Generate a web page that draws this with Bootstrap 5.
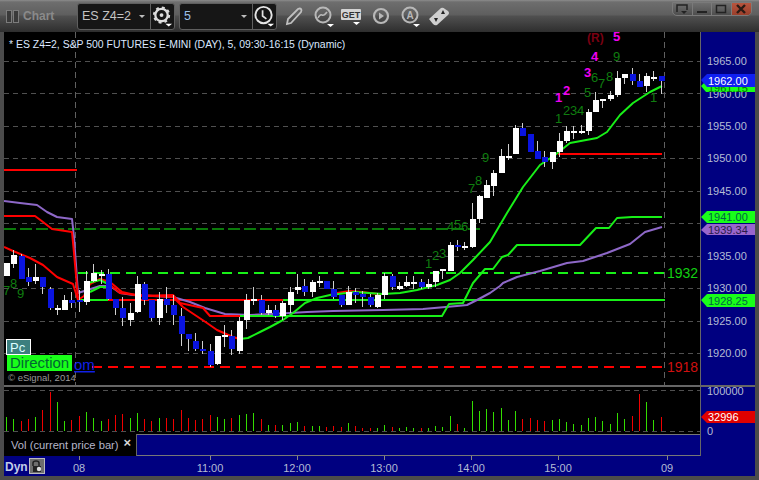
<!DOCTYPE html>
<html lang="en">
<head>
<meta charset="utf-8">
<title>Chart</title>
<link rel="stylesheet" href="https://cdn.jsdelivr.net/npm/bootstrap@5.3.0/dist/css/bootstrap.min.css">
<style>
html,body{margin:0;background:#4b4b4b;}
body{font-family:"Liberation Sans",Arial,sans-serif;overflow:hidden;}
.win-frame{width:759px;height:480px;background:#4b4b4b;}
.tool-strip{height:32px;background:linear-gradient(#8c8c8c 0,#6e6e6e 2px,#5e5e5e 15px,#505050 16px,#2e2e2e 32px);}
.bars-glyph{width:6px;height:13px;border:1px solid #7c7c7c;margin-right:1px;background:#3a3a3a;}
.bars-wrap{margin-left:6px;margin-right:3px;}
.chart-title{font-size:12px;font-weight:700;color:#8a8a8a;width:54px;}
.combo-box{height:27px;background:#161616;border:1px solid #5f5f5f;border-radius:3px;margin-right:4px;}
.combo-box + .tool-icon{margin-left:-2px;}
.combo-ro{width:72px;padding:0 5px 0 4px;color:#c4c4c4;font-size:12.5px;}
.combo-five{color:#9cc0e8;}
.combo-caret{border-left:3px solid transparent;border-right:3px solid transparent;border-top:3px solid #bdbdbd;}
.combo-btn{width:24px;height:25px;border-left:1px solid #5f5f5f;}
.tool-icon{width:29px;height:26px;}
.win-btns{height:14px;margin:2px 7px 0 auto;border:1px solid #7a7a7a;border-radius:0 0 5px 5px;width:80px;background:linear-gradient(#6f6f6f,#4e4e4e);}
.win-cell{width:20px;border-right:1px solid #7a7a7a;}
.win-close{width:20px;border-radius:0 0 4px 0;background:linear-gradient(#b8553e,#9a3f2c);color:#2a1a14;}
.chart-row{padding:0 4px;}
.plot-main{width:696px;height:353px;background:#000;}
.axis-main{width:55px;height:353px;background:#000080;border-left:1px solid #666;}
.split-line{height:2px;margin:0 4px;background:#666;}
.vol-col{width:696px;}
.plot-vol{width:696px;height:47px;background:#000;}
.legend-strip{height:22px;}
.legend-black{width:133px;background:#000;border-right:1px solid #666;color:#b6b6c8;font-size:11.2px;padding-left:7px;white-space:nowrap;}
.legend-x{color:#d8d8d8;font-size:13px;font-weight:700;line-height:1;margin:0 5px 0 auto;align-self:flex-start;padding-top:2px;}
.legend-navy{background:#000080;border-top:1px solid #777;border-bottom:1px solid #777;}
.axis-vol{width:55px;height:69px;background:#000080;border-left:1px solid #666;}
.axis-time{margin:0 4px;width:751px;height:20px;background:#000080;}
svg{display:block;}
svg text{font-family:"Liberation Sans",Arial,sans-serif;}
.grid-h{stroke:#505050;stroke-width:1;stroke-dasharray:5 4;fill:none;}
.grid-v{stroke:#606060;stroke-width:1;stroke-dasharray:6 4;}
.ln{fill:none;stroke-width:2;stroke-linejoin:round;}
.ln-red{stroke:#f00;}
.ln-lime{stroke:#18f018;}
.ln-purple{stroke:#8e68c8;}
.num-g{fill:#0f7d0f;font-size:13px;}
.num-m{fill:#f000f0;font-size:13px;font-weight:700;}
.ax-lab{fill:#b4bcd4;font-size:11px;}
.tag-txt{font-size:11px;}
.tm-lab{fill:#b4bcd4;font-size:11px;text-anchor:middle;}
</style>
</head>
<body>
<div class="win-frame d-flex flex-column">
  <div class="tool-strip d-flex align-items-center">
    <div class="bars-wrap d-flex"><span class="bars-glyph"></span><span class="bars-glyph"></span></div>
    <div class="chart-title">Chart</div>
    <div class="combo-box d-flex align-items-center">
      <div class="combo-ro d-flex align-items-center justify-content-between"><span>ES Z4=2</span><span class="combo-caret"></span></div>
      <div class="combo-btn d-flex align-items-center justify-content-center">
        <svg width="24" height="24" viewBox="0 0 24 24"><circle cx="11" cy="11" r="6.5" fill="none" stroke="#ddd" stroke-width="2.4"/><circle cx="11" cy="11" r="8" fill="none" stroke="#ddd" stroke-width="2" stroke-dasharray="3 3.3"/><circle cx="11" cy="11" r="2" fill="#ddd"/><path d="M15 20h7l-3.500 3z" fill="#fff"/></svg>
      </div>
    </div>
    <div class="combo-box d-flex align-items-center">
      <div class="combo-ro d-flex align-items-center justify-content-between"><span class="combo-five">5</span><span class="combo-caret"></span></div>
      <div class="combo-btn d-flex align-items-center justify-content-center">
        <svg width="24" height="24" viewBox="0 0 24 24"><circle cx="11" cy="11" r="8.500" fill="none" stroke="#e4e4e4" stroke-width="2"/><path d="M10 6v6l4 3" fill="none" stroke="#e4e4e4" stroke-width="1.800"/><path d="M15 20h7l-3.500 3z" fill="#fff"/></svg>
      </div>
    </div>
    <div class="tool-icon d-flex align-items-center justify-content-center">
      <svg width="24" height="24" viewBox="0 0 24 24"><path d="M5 20l1-5L16 5q2-1 3 0t0 3L9 19z" fill="none" stroke="#c0c0c0" stroke-width="1.800"/></svg>
    </div>
    <div class="tool-icon d-flex align-items-center justify-content-center">
      <svg width="24" height="24" viewBox="0 0 24 24"><circle cx="12" cy="11" r="7.500" fill="none" stroke="#b8b8b8" stroke-width="2"/><path d="M7 14q2-4 4-3t5-3" fill="none" stroke="#b8b8b8" stroke-width="1.600"/><path d="M16 20h7l-3.500 3z" fill="#fff"/></svg>
    </div>
    <div class="tool-icon d-flex align-items-center justify-content-center">
      <svg width="24" height="24" viewBox="0 0 24 24"><rect x="1" y="5" width="20" height="11" rx="1" fill="#d4d4d4"/><text x="11" y="14" font-size="9" font-weight="700" fill="#333" text-anchor="middle">GET</text><path d="M13 18h7l-3.500 3z" fill="#fff"/></svg>
    </div>
    <div class="tool-icon d-flex align-items-center justify-content-center">
      <svg width="24" height="24" viewBox="0 0 24 24"><circle cx="12" cy="12" r="7" fill="none" stroke="#b8b8b8" stroke-width="2.200"/><path d="M10 8.500l5 3.500-5 3.500z" fill="#b8b8b8"/></svg>
    </div>
    <div class="tool-icon d-flex align-items-center justify-content-center">
      <svg width="24" height="24" viewBox="0 0 24 24"><circle cx="12" cy="11" r="7.500" fill="none" stroke="#b8b8b8" stroke-width="2"/><text x="12" y="15" font-size="10" font-weight="700" fill="#b8b8b8" text-anchor="middle">A</text><path d="M15 20h7l-3.500 3z" fill="#fff"/></svg>
    </div>
    <div class="tool-icon d-flex align-items-center justify-content-center">
      <svg width="24" height="24" viewBox="0 0 24 24"><path d="M2 15L14 4q2-1 4 1l3 2q2 2 0 4L10 21q-2 1-4-1z" fill="#cfcfcf"/><path d="M16 6l2 4h-4zM9 18l-2-4h4z" fill="#222"/></svg>
    </div>
    <div class="win-btns d-flex align-self-start">
      <div class="win-cell d-flex align-items-center justify-content-center">
        <svg width="14" height="12" viewBox="0 0 14 12"><path d="M2 9V2h10v5" fill="none" stroke="#222" stroke-width="1.500"/><path d="M6 8h6l-3 3z" fill="#222"/></svg>
      </div>
      <div class="win-cell d-flex align-items-center justify-content-center">
        <svg width="14" height="12" viewBox="0 0 14 12"><rect x="2" y="8" width="10" height="2" fill="#222"/></svg>
      </div>
      <div class="win-cell d-flex align-items-center justify-content-center">
        <svg width="14" height="12" viewBox="0 0 14 12"><rect x="2.500" y="2.500" width="9" height="7" fill="none" stroke="#222" stroke-width="1.500"/></svg>
      </div>
      <div class="win-close d-flex align-items-center justify-content-center">
        <svg width="14" height="12" viewBox="0 0 14 12"><path d="M3 2l8 8M11 2l-8 8" stroke="#2a1a14" stroke-width="2.400"/></svg>
      </div>
    </div>
  </div>

  <div class="chart-row d-flex">
    <svg class="plot-main" viewBox="4 32 696 353" id="plotMain">
      <g id="gridH"></g>
      <line class="grid-v" x1="75.500" y1="32" x2="75.500" y2="385"/>
      <line class="grid-v" x1="664.500" y1="32" x2="664.500" y2="385"/>
      <text x="9" y="48" fill="#dce8ff" font-size="10.45">* ES Z4=2, S&amp;P 500 FUTURES E-MINI (DAY), 5, 09:30-16:15 (Dynamic)</text>

      <line x1="4" y1="170" x2="77" y2="170" stroke="#f00" stroke-width="2"/>
      <line x1="4" y1="229" x2="480" y2="229" stroke="#0a7a0a" stroke-width="2" stroke-dasharray="12 4"/>
      <line x1="78" y1="273" x2="665" y2="273" stroke="#18f018" stroke-width="2" stroke-dasharray="10 6"/>
      <line x1="92" y1="367" x2="664" y2="367" stroke="#f00" stroke-width="2" stroke-dasharray="10 6"/>
      <line x1="78" y1="300" x2="665" y2="300" stroke="#18f018" stroke-width="2"/>
      <line x1="108" y1="300" x2="283" y2="300" stroke="#f00" stroke-width="2"/>
      <line x1="558" y1="154" x2="662" y2="154" stroke="#f00" stroke-width="2"/>

      <polyline class="ln ln-purple" points="4,201 20,203 37,205 47,212 57,217 72,219 74,237 78,293 100,286 110,286 120,293 133,295 173,297 190,302 205,308 225,314 250,315 290,313 307,312 333,311 383,310 423,309 457,306 467,305 477,300 490,293 500,286 503,283 517,277 540,271 567,263 583,261 607,253 630,244 645,232 662,227"/>
      <polyline class="ln ln-red" points="4,216 35,216 43,222 52,229 72,232 74,253 78,298"/>
      <polyline class="ln ln-red" points="4,247 13,251 30,258 43,265 57,277 73,284 78,300 84,296 90,284 100,279 110,282 122,292 140,296 173,295 180,303 203,308 210,316 275,316"/>
      <polyline class="ln ln-red" points="110,285 120,293 137,295 173,297 183,307 207,323 217,330 233,337 240,339"/>
      <polyline class="ln ln-red" points="330,295 337,293 350,291 362,292 378,294 385,294"/>
      <polyline class="ln ln-lime" points="88,283 100,280 110,285"/>
      <polyline class="ln ln-lime" points="90,292 100,287 110,287"/>
      <polyline class="ln ln-lime" points="240,339 248,338 260,332 270,327 283,320 293,313 305,303 317,298 330,295 355,292 383,294 400,293 417,290 437,285 450,280 460,273 473,260 490,242 507,213 523,187 540,165 555,155 570,143 597,138 607,132 620,115 633,103 650,92 662,86"/>
      <polyline class="ln ln-lime" points="240,316 442,316 449,304 463,303 470,289 473,283 485,269 493,269 502,257 508,255 517,245 580,245 596,228 609,228 617,218 632,217 662,217"/>
      <g id="candles"></g>

      <g class="num-g">
        <text x="3" y="295">7</text><text x="10" y="288">8</text><text x="17" y="298">9</text>
        <text x="425" y="268">1</text><text x="432" y="260">2</text><text x="439" y="258">3</text>
        <text x="447" y="231">4</text><text x="454" y="229">5</text><text x="461" y="231">6</text>
        <text x="468" y="193">7</text><text x="475" y="185">8</text><text x="482" y="162">9</text>
        <text x="555" y="123">1</text><text x="563" y="115">2</text><text x="570" y="115">3</text><text x="577" y="115">4</text>
        <text x="584" y="97">5</text><text x="591" y="82">6</text><text x="598" y="88">7</text><text x="606" y="81">8</text><text x="613" y="61">9</text>
        <text x="650" y="102">1</text>
      </g>
      <g class="num-m">
        <text x="555" y="102">1</text><text x="563" y="95">2</text><text x="584" y="77">3</text><text x="591" y="61">4</text><text x="613" y="41">5</text>
      </g>
      <text x="587" y="42" fill="#7a0012" font-size="12" font-weight="700">(R)</text>

      <rect x="6.500" y="339.500" width="24" height="15" fill="#3c7f7f" stroke="#fff"/>
      <text x="10" y="352" fill="#dff" font-size="13">Pc</text>
      <rect x="7" y="355" width="65" height="16" fill="#19ff19"/>
      <text x="10" y="368" fill="#063" font-size="15">Direction</text>
      <text x="74" y="370" fill="#1020e8" font-size="15" text-decoration="underline">om</text>
      <text x="8" y="381" fill="#9a9a9a" font-size="9.5">© eSignal, 2014</text>
      <text x="667" y="278" fill="#12d012" font-size="14">1932</text>
      <text x="667" y="372" fill="#d01010" font-size="14">1918</text>
    </svg>
    <svg class="axis-main" viewBox="701 32 54 353">
      <g class="ax-lab">
        <text x="707" y="65">1965.00</text><text x="707" y="98">1960.00</text><text x="707" y="130">1955.00</text>
        <text x="707" y="162">1950.00</text><text x="707" y="195">1945.00</text><text x="707" y="260">1935.00</text>
        <text x="707" y="292">1930.00</text><text x="707" y="325">1925.00</text><text x="707" y="357">1920.00</text>
      </g>
      <polygon points="701,86 706,81 755,81 755,92 706,92" fill="#19ff19"/>
      <text x="708" y="92" class="tag-txt" fill="#0a6a0a">1961.15</text>
      <polygon points="701,80 707,74 755,74 755,87 707,87" fill="#1020f0"/>
      <text x="708" y="85" class="tag-txt" fill="#fff">1962.00</text>
      <polygon points="701,217 707,211 755,211 755,223 707,223" fill="#19ff19"/>
      <text x="708" y="221" class="tag-txt" fill="#064">1941.00</text>
      <polygon points="701,230 707,224 755,224 755,235 707,235" fill="#9966cc"/>
      <text x="708" y="234" class="tag-txt" fill="#2a1a4a">1939.34</text>
      <polygon points="701,300 707,294 755,294 755,307 707,307" fill="#19ff19"/>
      <text x="708" y="305" class="tag-txt" fill="#064">1928.25</text>
    </svg>
  </div>
  <div class="split-line"></div>
  <div class="chart-row d-flex">
    <div class="vol-col d-flex flex-column">
      <svg class="plot-vol" viewBox="4 387 696 47" id="plotVol">
        <line class="grid-h" x1="4" y1="390.500" x2="700" y2="390.500"/>
        <line class="grid-h" x1="4" y1="431.500" x2="700" y2="431.500"/>
        <g id="volBars"></g>
      </svg>
      <div class="legend-strip d-flex">
        <div class="legend-black d-flex align-items-center"><span>Vol (current price bar)</span><span class="legend-x">×</span></div>
        <div class="legend-navy flex-grow-1"></div>
      </div>
    </div>
    <svg class="axis-vol" viewBox="701 387 54 69">
      <text x="707" y="395" class="ax-lab">100000</text>
      <text x="707" y="435" class="ax-lab">0</text>
      <polygon points="701,417 707,411 755,411 755,423 707,423" fill="#e00000"/>
      <text x="708" y="421" class="tag-txt" fill="#fff">32996</text>
    </svg>
  </div>
  <svg class="axis-time" viewBox="4 456 751 20">
    <text x="5" y="471" fill="#c0cce8" font-size="12" font-weight="700">Dyn</text>
    <rect x="29.500" y="458.500" width="15" height="15" fill="#6e6e6e" stroke="#bbb"/>
    <path d="M33 466v-3q0-2 3-2t3 2v3" fill="none" stroke="#222" stroke-width="1.500"/>
    <rect x="33" y="466" width="8" height="6" fill="#222"/>
    <circle cx="39" cy="469" r="2.200" fill="#ddd"/>
    <g stroke="#888"><line x1="79.500" y1="456" x2="79.500" y2="460"/><line x1="210.500" y1="456" x2="210.500" y2="460"/><line x1="297.500" y1="456" x2="297.500" y2="460"/><line x1="384.500" y1="456" x2="384.500" y2="460"/><line x1="471.500" y1="456" x2="471.500" y2="460"/><line x1="558.500" y1="456" x2="558.500" y2="460"/><line x1="667.500" y1="456" x2="667.500" y2="460"/></g>
    <g class="tm-lab"><text x="79" y="472">08</text><text x="210" y="472">11:00</text><text x="297" y="472">12:00</text><text x="384" y="472">13:00</text><text x="471" y="472">14:00</text><text x="558" y="472">15:00</text><text x="667" y="472">09</text></g>
  </svg>
</div>
<script>
(function(){
var NS='http://www.w3.org/2000/svg';
function el(p,n,a){var e=document.createElementNS(NS,n);for(var k in a)e.setAttribute(k,a[k]);p.appendChild(e);return e;}
var gh=document.getElementById('gridH');
[61,93,126,158,191,223,256,288,321,353].forEach(function(y){el(gh,'line',{'class':'grid-h',x1:4,x2:700,y1:y+.5,y2:y+.5});});
// candles: [wickTop, bodyTop, bodyBottom, wickBottom, blue?] in crop coordinates
var sets=[
 [160,[[310,310,347,347,0],[270,286,312,325,0],[283,288,357,357,1],[324,352,366,378,1],[313,351,363,373,0],[350,352,380,402,1],[382,388,443,450,1],[436,445,449,466,0],[405,420,450,450,0],[397,420,429,444,1],[390,419,424,456,1],[334,363,426,436,0],[312,340,363,365,0],[330,341,345,372,0],[328,342,417,420,1],[417,417,443,465,1],[412,444,473,497,1],[430,459,480,497,0],[348,372,456,460,0],[365,372,420,435,1],[420,420,473,483,1],[397,418,473,494,0],[380,417,435,460,1],[405,435,465,495,1],[443,468,521,558,1],[522,522,537,572,1],[518,544,567,573,1],[544,567,573,582,1],[552,574,615,620,1],[528,528,611,615,0],[495,525,530,560,0],[510,528,567,585,1],[470,483,572,582,0],[403,420,480,507,0]]],
 [220,[[200,238,242,255,0],[225,240,278,285,1],[255,270,278,285,0],[255,270,288,295,1],[243,250,287,300,0],[200,216,255,280,0],[162,201,210,222,0],[178,198,215,228,1],[180,186,216,232,0],[168,183,188,202,0],[183,183,207,207,1],[183,208,231,237,1],[225,225,255,262,1],[198,216,255,255,0],[205,216,225,248,1],[212,222,231,261,1],[222,231,255,260,1],[220,225,261,265,0],[160,168,225,237,0],[162,168,201,210,1],[186,198,207,210,0],[168,186,198,201,0],[168,186,191,207,0],[178,186,201,207,1],[177,192,201,208,0],[153,153,186,200,0],[147,147,151,177,0],[66,75,153,153,0],[60,75,81,93,1],[66,78,84,90,0]]],
 [100,[[309,357,441,443,0],[285,288,357,370,0],[240,255,294,294,0],[210,219,258,288,0],[147,168,219,219,0],[132,168,174,180,0],[75,84,162,162,0],[69,84,108,108,1],[102,102,156,156,1],[123,153,177,177,1],[153,171,186,201,1],[156,156,186,207,0],[98,123,156,170,0],[78,93,123,129,0],[78,93,99,117,0],[75,93,99,102,0],[27,36,93,105,0]]],
 [0,[[276,300,336,336,0],[298,298,302,323,0],[273,285,297,303,0],[213,234,285,290,0],[222,222,234,252,0],[204,222,243,256,1],[222,243,261,261,1],[219,228,258,276,0],[213,231,237,243,0],[228,228,243,282,1]]]
];
var cg=document.getElementById('candles'),i=0;
sets.forEach(function(s){s[1].forEach(function(c){
  var x=Math.round(6+7.274*i),y=function(v){return Math.round(s[0]+v/3);};
  el(cg,'rect',{x:x,y:y(c[0]),width:1,height:Math.max(1,y(c[3])-y(c[0])),fill:'#d0d0d0','shape-rendering':'crispEdges'});
  el(cg,'rect',{x:x-2,y:y(c[1]),width:6,height:Math.max(2,y(c[2])-y(c[1])),fill:c[4]?'#0a14e0':'#fff','shape-rendering':'crispEdges'});
  i++;
});});
// volume bars: top in crop px, g/r
var v='110g 117g 123r 117r 110g 90r 35r 66g 123g 120r 108r 96g 113g 123g 117r 105r 102r 114g 99g 117r 123r 114g 114r 117r 90r 114r 120r 117r 105r 111g 117g 114r 105g 102g 99g 117r 135g 135r 135g 129g 126g 138r 138g 138g 141r 138r 141r 129g 138r 144r 144r 144g 135g 141r 144g 141g 144g 144r 144g 138g 141g 108g 132r 144g 63g 93g 87g 96g 84g 120g 93g 117r 114r 120r 123r 120g 117g 126g 132g 135g 114g 111g 123g 132g 99g 117g 108r 42r 66g 120g 111r'.split(' ');
var vg=document.getElementById('volBars');
v.forEach(function(t,k){
  var top=Math.round(380+parseInt(t)/3),x=Math.round(6+7.274*k);
  el(vg,'rect',{x:x,y:top,width:1,height:431-top,fill:t.slice(-1)==='g'?'#33dd00':'#f00000','shape-rendering':'crispEdges'});
});
})();
</script>
<script src="https://cdn.jsdelivr.net/npm/bootstrap@5.3.0/dist/js/bootstrap.bundle.min.js"></script>
</body>
</html>
